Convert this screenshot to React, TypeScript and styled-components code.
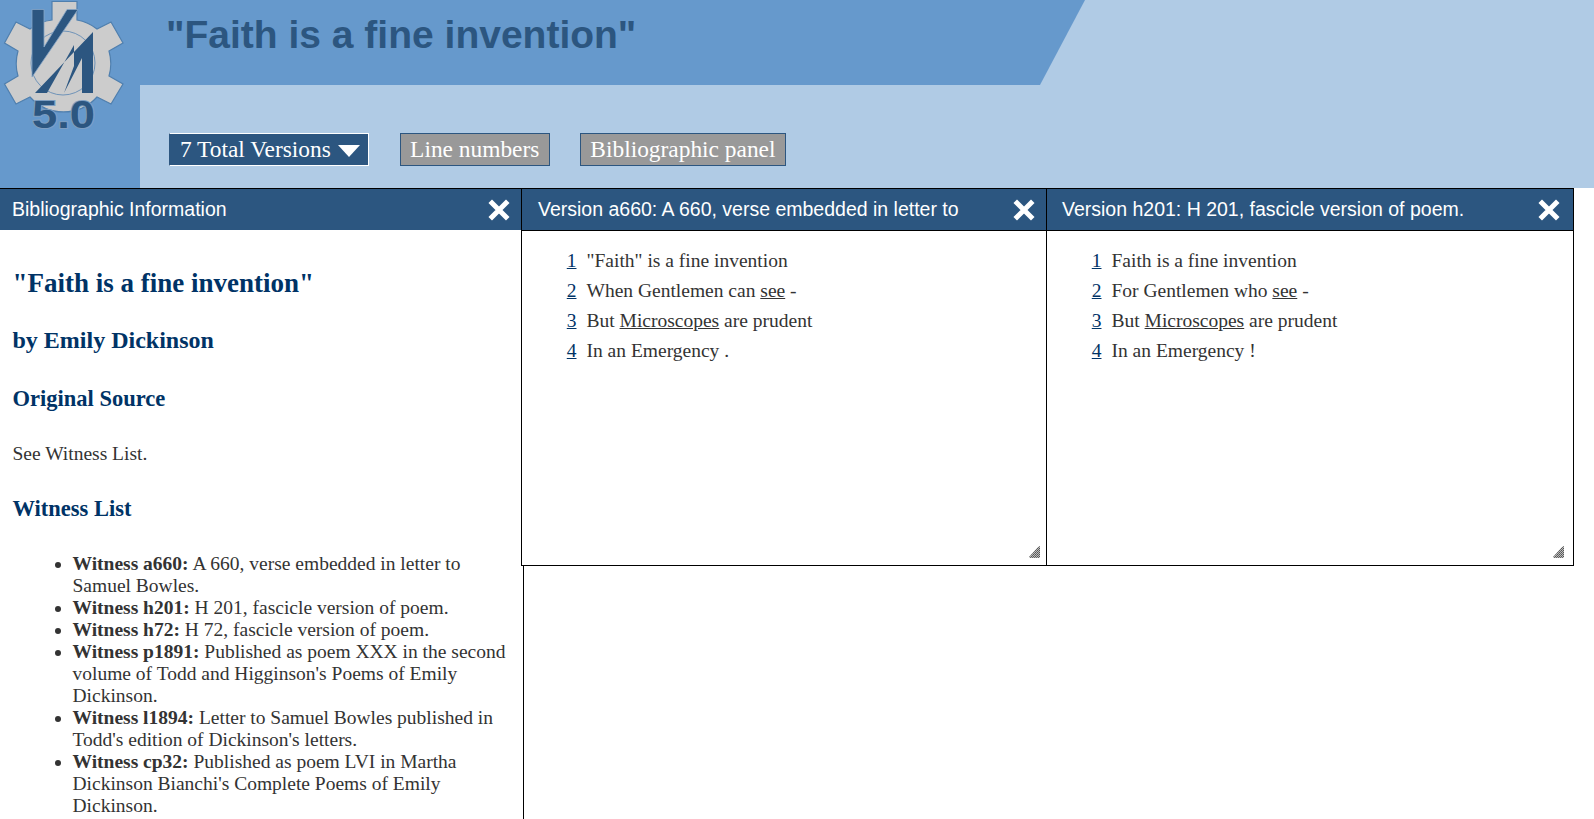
import React from "react";
import styled, { createGlobalStyle } from "styled-components";

const Global = createGlobalStyle`
  html, body { margin: 0; padding: 0; height: 819px; overflow: hidden; background: #fff; }
  #root { height: 819px; }
`;

const Page = styled.div`
  width: 1594px;
  height: 819px;
  overflow: hidden;
  font-family: "Liberation Serif", serif;
  color: #333;
`;

const Header = styled.header`
  display: flex;
  height: 188px;
  background: #b0cbe5;
`;

const LogoColumn = styled.div`
  width: 140px;
  flex: none;
  background: #6699cc;
`;

const HeaderMain = styled.div`
  flex: 1;
  display: flex;
  flex-direction: column;
`;

const Banner = styled.div`
  width: 945px;
  height: 85px;
  background: #6699cc;
  clip-path: polygon(0 0, 100% 0, calc(100% - 45px) 100%, 0 100%);
  padding-left: 26px;
  box-sizing: border-box;
`;

const Title = styled.h1`
  margin: 0;
  font: bold 39px/70px "Liberation Sans", sans-serif;
  color: #2c5680;
`;

const Toolbar = styled.div`
  display: flex;
  gap: 30.5px;
  padding: 48px 0 0 29px;
`;

const ToolButton = styled.button<{ $active?: boolean }>`
  display: flex;
  align-items: center;
  height: 33px;
  box-sizing: border-box;
  padding: ${(p) => (p.$active ? "0 9.5px 0 10px" : "0 9.25px")};
  font: 23.4px "Liberation Serif", serif;
  color: #fff;
  background: ${(p) => (p.$active ? "#2c5680" : "#999")};
  border: 1px solid #2c5680;
  border-top-color: ${(p) => (p.$active ? "#fff" : "#2c5680")};
  border-right-color: ${(p) => (p.$active ? "#fff" : "#2c5680")};
  border-bottom-color: ${(p) => (p.$active ? "#fff" : "#2c5680")};
`;

const Caret = styled.span`
  width: 0;
  height: 0;
  margin: 3px -1px 0 7px;
  border-left: 11px solid transparent;
  border-right: 11px solid transparent;
  border-top: 12px solid #fff;
`;

const Workspace = styled.main`
  display: flex;
  align-items: flex-start;
`;

const BiblioPanel = styled.section`
  width: 524px;
  height: 631px;
  flex: none;
  box-sizing: border-box;
  border-top: 1px solid #000;
  border-right: 1px solid #000;
  overflow: hidden;
`;

const VersionPanel = styled.section<{ $first?: boolean }>`
  width: ${(p) => (p.$first ? "526px" : "527px")};
  height: 378px;
  flex: none;
  box-sizing: border-box;
  position: relative;
  background: #fff;
  border-bottom: 1px solid #000;
  border-right: 1px solid #000;
  border-top: 1px solid #000;
  border-left: ${(p) => (p.$first ? "1px solid #000" : "none")};
  margin-left: ${(p) => (p.$first ? "-3px" : "0")};
`;

const PanelBar = styled.div<{ $ruled?: boolean; $first?: boolean }>`
  display: flex;
  align-items: center;
  justify-content: space-between;
  height: 41px;
  padding: 0 ${(p) => (p.$first ? "11px" : "13px")} 0 ${(p) => (p.$first ? "13px" : "12px")};
  background: #2c5680;
  border-bottom: ${(p) => (p.$ruled ? "1px solid #000" : "none")};
  color: #fff;
`;

const PanelTitle = styled.span<{ $inset?: boolean }>`
  font: 19.5px "Liberation Sans", sans-serif;
  white-space: nowrap;
  overflow: hidden;
  flex: 1;
  padding-left: ${(p) => (p.$inset ? "3px" : "0")};
`;

const Close = styled.svg`
  width: 22px;
  height: 22px;
  flex: none;
`;

const BiblioBody = styled.div`
  padding: 0 12.5px;
  font-size: 19.5px;
  line-height: 22px;
`;

const H2 = styled.h2`
  margin: 38px 0 0;
  font-size: 27px;
  line-height: 30px;
  color: #003366;
`;

const H3 = styled.h3`
  margin: 29px 0 0;
  font-size: 24px;
  line-height: 27px;
  color: #003366;
`;

const H4 = styled.h4<{ $tight?: boolean }>`
  margin: ${(p) => (p.$tight ? "31px" : "32px")} 0 0;
  font-size: 22.5px;
  line-height: 26px;
  color: #003366;
`;

const Para = styled.p`
  margin: 31px 0 0;
`;

const Witnesses = styled.ul`
  margin: 31px 0 0;
  padding: 0 0 0 60px;
`;

const Lines = styled.div`
  padding: 15px 0 0 32.5px;
  font-size: 19.5px;
`;

const Line = styled.div`
  display: flex;
  height: 30px;
  align-items: center;
`;

const LineNo = styled.a`
  width: 22px;
  margin-right: 10px;
  text-align: right;
  color: #003366;
  text-decoration: underline;
`;

const U = styled.span`
  text-decoration: underline;
`;

const Grip = styled.svg<{ $first?: boolean }>`
  position: absolute;
  right: ${(p) => (p.$first ? "5px" : "8px")};
  bottom: 7px;
  width: 12px;
  height: 12px;
`;

function Logo() {
  return (
    <svg width="130" height="140" viewBox="0 0 130 140" style={{ display: "block" }}>
      <path
        d="M52 1.5 H77 V20 A45 45 0 0 1 97 29 L111 22 L123 43 L109 51 A45 45 0 0 1 109 76 L123 84 L111 104 L97 97 A45 45 0 0 1 30 97 L16 104 L4.5 84 L18 76 A45 45 0 0 1 18 51 L4.5 43 L16 22 L30 29 A45 45 0 0 1 52 20 Z"
        fill="#ccc"
        stroke="#4f7fae"
        strokeWidth="1.2"
      />
      <circle cx="63" cy="63" r="32" fill="none" stroke="#6f93b8" strokeWidth="1" />
      <path
        d="M32 9.5 H44 V47 L67 9.5 H78 L32 77 Z"
        fill="#2c5680"
        stroke="#86a6c6"
        strokeWidth="0.8"
      />
      <path
        d="M35 93 L93 32 V93 H82 V58 L64 93 L74 66 V45 L47 93 Z"
        fill="#2c5680"
      />
      <text
        x="63.5"
        y="128"
        textAnchor="middle"
        fontFamily="'Liberation Sans', sans-serif"
        fontWeight="bold"
        fontSize="39"
        textLength="63"
        lengthAdjust="spacingAndGlyphs"
        fill="#2c5680"
        stroke="#7f9fc2"
        strokeWidth="2"
        style={{ paintOrder: "stroke" }}
      >
        5.0
      </text>
    </svg>
  );
}

function CloseIcon() {
  return (
    <Close viewBox="0 0 22 22">
      <path d="M4 4 L18 18 M18 4 L4 18" stroke="#fff" strokeWidth="5" strokeLinecap="square" />
    </Close>
  );
}

function GripIcon({ id, first }: { id: string; first?: boolean }) {
  return (
    <Grip viewBox="0 0 12 12" $first={first}>
      <defs>
        <pattern id={id} width="2" height="2" patternUnits="userSpaceOnUse">
          <rect width="2" height="2" fill="#bbb" />
          <rect width="1" height="1" fill="#555" />
          <rect x="1" y="1" width="1" height="1" fill="#666" />
        </pattern>
      </defs>
      <path d="M0 11 L9 1 L11 0 V11 L10 12 H1 Z" fill={`url(#${id})`} />
    </Grip>
  );
}

const poem = (first: string, second: string, last: string) => (
  <Lines>
    <Line><LineNo>1</LineNo><span>{first}</span></Line>
    <Line><LineNo>2</LineNo><span>{second} <U>see</U> -</span></Line>
    <Line><LineNo>3</LineNo><span>But <U>Microscopes</U> are prudent</span></Line>
    <Line><LineNo>4</LineNo><span>In an Emergency {last}</span></Line>
  </Lines>
);

export default function App() {
  return (
    <Page>
      <Global />
      <Header>
        <LogoColumn><Logo /></LogoColumn>
        <HeaderMain>
          <Banner><Title>"Faith is a fine invention"</Title></Banner>
          <Toolbar>
            <ToolButton $active>7 Total Versions<Caret /></ToolButton>
            <ToolButton>Line numbers</ToolButton>
            <ToolButton>Bibliographic panel</ToolButton>
          </Toolbar>
        </HeaderMain>
      </Header>
      <Workspace>
        <BiblioPanel>
          <PanelBar>
            <PanelTitle>Bibliographic Information</PanelTitle>
            <CloseIcon />
          </PanelBar>
          <BiblioBody>
            <H2>"Faith is a fine invention"</H2>
            <H3>by Emily Dickinson</H3>
            <H4>Original Source</H4>
            <Para>See Witness List.</Para>
            <H4 $tight>Witness List</H4>
            <Witnesses>
              <li><b>Witness a660:</b> A 660, verse embedded in letter to Samuel Bowles.</li>
              <li><b>Witness h201:</b> H 201, fascicle version of poem.</li>
              <li><b>Witness h72:</b> H 72, fascicle version of poem.</li>
              <li><b>Witness p1891:</b> Published as poem XXX in the second volume of Todd and Higginson's Poems of Emily Dickinson.</li>
              <li><b>Witness l1894:</b> Letter to Samuel Bowles published in Todd's edition of Dickinson's letters.</li>
              <li><b>Witness cp32:</b> Published as poem LVI in Martha Dickinson Bianchi's Complete Poems of Emily Dickinson.</li>
            </Witnesses>
          </BiblioBody>
        </BiblioPanel>
        <VersionPanel $first>
          <PanelBar $ruled $first>
            <PanelTitle $inset>Version a660: A 660, verse embedded in letter to</PanelTitle>
            <CloseIcon />
          </PanelBar>
          {poem('"Faith" is a fine invention', "When Gentlemen can", ".")}
          <GripIcon id="grip-a" first />
        </VersionPanel>
        <VersionPanel>
          <PanelBar $ruled>
            <PanelTitle $inset>Version h201: H 201, fascicle version of poem.</PanelTitle>
            <CloseIcon />
          </PanelBar>
          {poem("Faith is a fine invention", "For Gentlemen who", "!")}
          <GripIcon id="grip-b" />
        </VersionPanel>
      </Workspace>
    </Page>
  );
}
